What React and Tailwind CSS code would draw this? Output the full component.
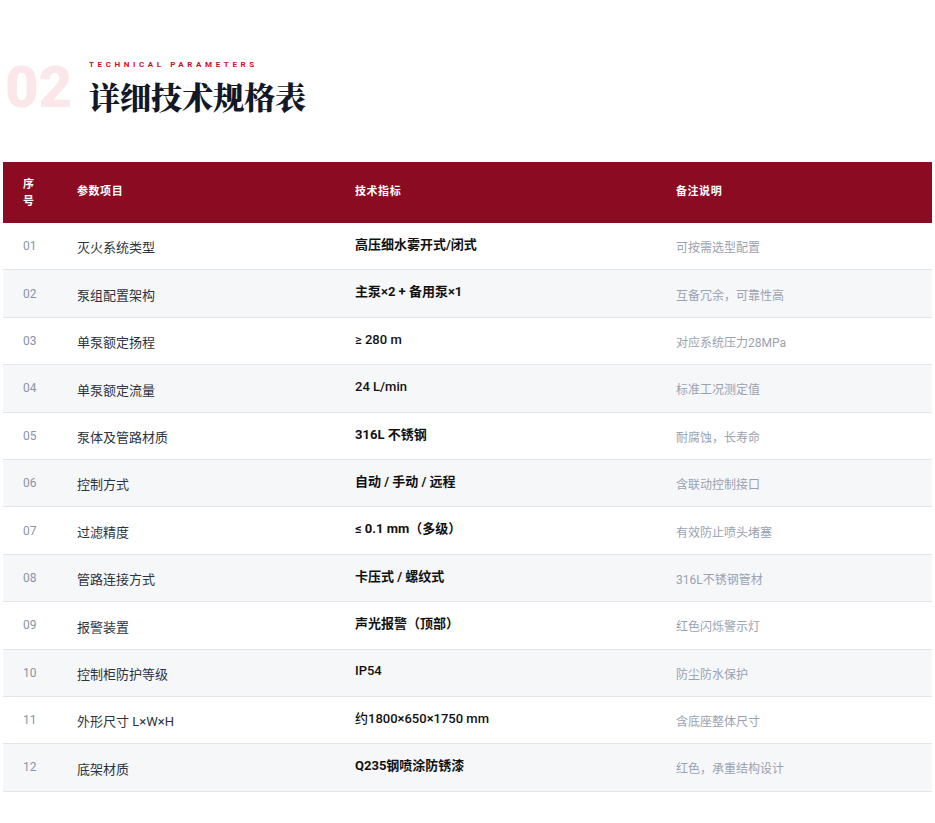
const rows = [
  ["01", "灭火系统类型", "高压细水雾开式/闭式", "可按需选型配置", true],
  ["02", "泵组配置架构", "主泵×2 + 备用泵×1", "互备冗余，可靠性高", true],
  ["03", "单泵额定扬程", "≥ 280 m", "对应系统压力28MPa", false],
  ["04", "单泵额定流量", "24 L/min", "标准工况测定值", false],
  ["05", "泵体及管路材质", "316L 不锈钢", "耐腐蚀，长寿命", true],
  ["06", "控制方式", "自动 / 手动 / 远程", "含联动控制接口", true],
  ["07", "过滤精度", "≤ 0.1 mm（多级）", "有效防止喷头堵塞", true],
  ["08", "管路连接方式", "卡压式 / 螺纹式", "316L不锈钢管材", true],
  ["09", "报警装置", "声光报警（顶部）", "红色闪烁警示灯", true],
  ["10", "控制柜防护等级", "IP54", "防尘防水保护", false],
  ["11", "外形尺寸 L×W×H", "约1800×650×1750 mm", "含底座整体尺寸", false],
  ["12", "底架材质", "Q235钢喷涂防锈漆", "红色，承重结构设计", true],
];

const font = { fontFamily: '"Roboto", "Noto Sans CJK SC", sans-serif' };

export default function App() {
  return (
    <div className="bg-white min-h-[823px] px-[3px] pt-[56px]" style={font}>
      <div className="flex items-start">
        <div className="text-[58px] leading-none font-black text-[#fbe7ea] w-[86px] pl-[2px] pt-[2px]">02</div>
        <div>
          <div className="text-[8px] font-bold tracking-[0.45em] text-[#c8102e] mt-[3px]">TECHNICAL PARAMETERS</div>
          <h1 className="text-[31px] font-black text-[#111827] mt-[6px] leading-tight" style={{ fontFamily: '"Noto Serif CJK SC", "Noto Sans CJK SC", serif' }}>详细技术规格表</h1>
        </div>
      </div>
      <div className="mt-[46px]">
        <div className="bg-[#8b0b23] text-white text-[11px] font-bold h-[61px] flex items-center tracking-wider">
          <div className="w-[74px] pl-[20px] leading-[17px]">序<br />号</div>
          <div className="w-[278px]">参数项目</div>
          <div className="w-[321px]">技术指标</div>
          <div>备注说明</div>
        </div>
        {rows.map(([n, a, b, c, bold], i) => (
          <div key={n} className={`h-[47.4px] flex items-center border-b border-[#e2e5ec] ${i % 2 ? "bg-[#f6f7f9]" : "bg-white"}`}>
            <div className="w-[74px] pl-[20px] text-[12px] text-[#8a94a6]">{n}</div>
            <div className="w-[278px] text-[13px] text-[#2d3340] pt-[4px]">{a}</div>
            <div className={`w-[321px] text-[13px] text-[#111] pb-[3px] ${bold ? "font-bold" : "font-medium"}`}>{b}</div>
            <div className="text-[12px] text-[#9aa2b1] pt-[4px]">{c}</div>
          </div>
        ))}
      </div>
    </div>
  );
}
